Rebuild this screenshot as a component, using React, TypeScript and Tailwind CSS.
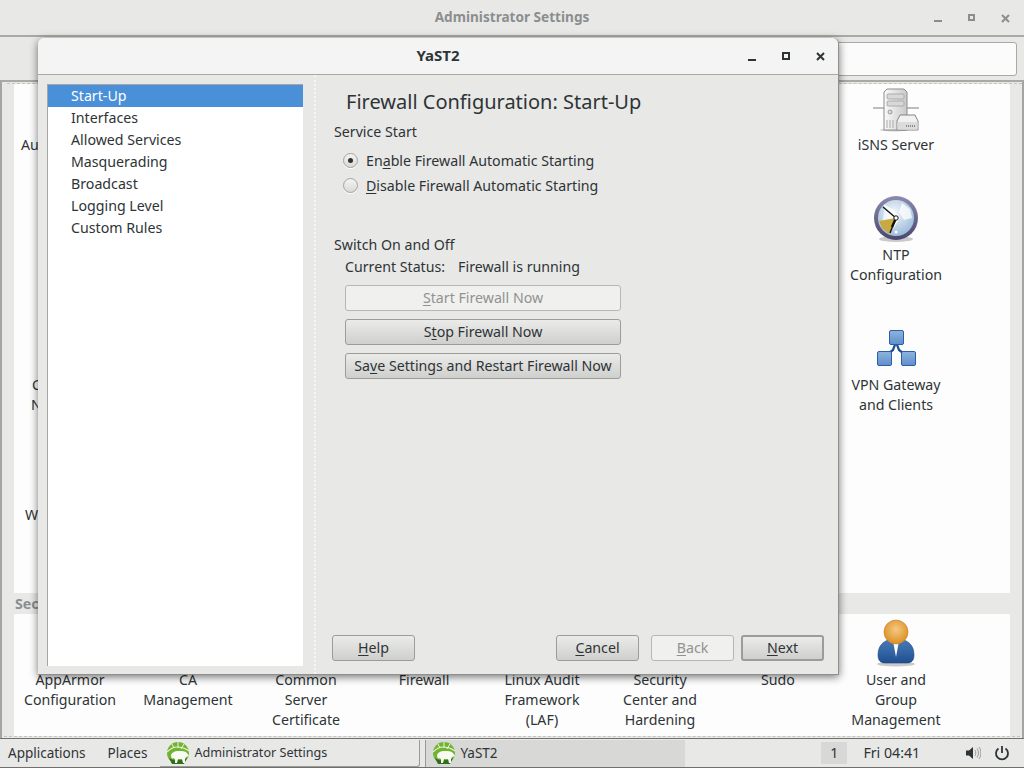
import type { ReactNode } from 'react';

const FONT = 'font-["Noto_Sans","Open_Sans",sans-serif]';

function ServerIcon() {
  return (
    <svg width="48" height="48" viewBox="0 0 48 48">
      <defs>
        <linearGradient id="srv" x1="0" y1="0" x2="1" y2="0">
          <stop offset="0" stopColor="#fafafa" />
          <stop offset="1" stopColor="#c9c9c9" />
        </linearGradient>
      </defs>
      <path d="M1 24h46" stroke="#bdbdbd" strokeWidth="2" />
      <ellipse cx="22" cy="46" rx="14" ry="1.500" fill="#00000033" />
      <path d="M12 8l3-3h17l3 3v38H12z" fill="url(#srv)" stroke="#8c8c8c" />
      <rect x="15" y="10" width="17" height="5" rx="1" fill="#d8d8d8" stroke="#999" strokeWidth=".7" />
      <rect x="15" y="17" width="17" height="5" rx="1" fill="#d8d8d8" stroke="#999" strokeWidth=".7" />
      <circle cx="18" cy="28" r="2" fill="#ddd" stroke="#888" strokeWidth=".8" />
      <path d="M15 36v8M18 36v8M21 36v8" stroke="#aaa" />
      <path d="M26 35l2-4h15l3 6v9H25v-9z" fill="#f1f1f1" stroke="#858585" />
      <path d="M25.500 38h20v7.500h-20z" fill="#dcdcdc" />
      <path d="M34 42h10" stroke="#888" strokeWidth="2" strokeDasharray="1 1" />
    </svg>
  );
}

function ClockIcon() {
  return (
    <svg width="48" height="48" viewBox="0 0 48 48">
      <defs>
        <radialGradient id="face" cx=".45" cy=".35" r=".75">
          <stop offset="0" stopColor="#f5f7fa" />
          <stop offset="1" stopColor="#8fb3d4" />
        </radialGradient>
        <linearGradient id="rim" x1="0" y1="0" x2="0" y2="1">
          <stop offset="0" stopColor="#8d8bb0" />
          <stop offset="1" stopColor="#4a466e" />
        </linearGradient>
      </defs>
      <ellipse cx="24" cy="45" rx="17" ry="3" fill="#00000033" />
      <circle cx="24" cy="24" r="22" fill="url(#rim)" />
      <circle cx="24" cy="24" r="18" fill="url(#face)" />
      <path d="M12 10l10 6 6 8-6 10-6 4-6-8 2-12z" fill="#ffffff" opacity=".7" />
      <path d="M30 9l8 6 2 9-8 2-5-8z" fill="#ffffff" opacity=".75" />
      <path d="M24 24L7 27l3 7 7 6z" fill="#c8a93f" />
      <path d="M24 24L11 13M24 24l-6 15" stroke="#111" strokeWidth="1.400" fill="none" />
      <path d="M24 24l-4 9" stroke="#111" strokeWidth="2.400" />
      <circle cx="24" cy="24" r="2.200" fill="#fff" stroke="#111" />
      <circle cx="24" cy="38" r="1.500" fill="#fff" />
    </svg>
  );
}

function NetworkIcon() {
  return (
    <svg width="48" height="48" viewBox="0 0 48 48">
      <defs>
        <linearGradient id="nb" x1="0" y1="0" x2="0" y2="1">
          <stop offset="0" stopColor="#8fb3de" />
          <stop offset="1" stopColor="#5f8fcb" />
        </linearGradient>
      </defs>
      <path d="M24 18l-3 8-8 6M24 18l3 8 8 6" stroke="#1f4f96" strokeWidth="2.200" fill="none" />
      <rect x="17.500" y="6.500" width="14" height="14" rx="1.500" fill="url(#nb)" stroke="#2a5ea8" />
      <rect x="5.500" y="27.500" width="14" height="14" rx="1.500" fill="url(#nb)" stroke="#2a5ea8" />
      <rect x="29.500" y="27.500" width="14" height="14" rx="1.500" fill="url(#nb)" stroke="#2a5ea8" />
    </svg>
  );
}

function UserIcon() {
  return (
    <svg width="48" height="48" viewBox="0 0 48 48">
      <defs>
        <radialGradient id="head" cx=".5" cy=".4" r=".6">
          <stop offset="0" stopColor="#f4c982" />
          <stop offset="1" stopColor="#dc8f23" />
        </radialGradient>
        <linearGradient id="body" x1="0" y1="0" x2="0" y2="1">
          <stop offset="0" stopColor="#4a7cb8" />
          <stop offset="1" stopColor="#1f4f92" />
        </linearGradient>
      </defs>
      <ellipse cx="24" cy="45" rx="19" ry="2.500" fill="#00000033" />
      <path d="M6 36c0-10 6-14 13-16h10c7 2 13 6 13 16 0 6-3 8-7 8H13c-4 0-7-2-7-8z" fill="url(#body)" stroke="#1b4580" strokeWidth=".6" />
      <path d="M21 22l3 16 3-16z" fill="#fff" />
      <circle cx="24" cy="13" r="12" fill="url(#head)" stroke="#c57f1c" strokeWidth=".6" />
    </svg>
  );
}

function GeckoIcon() {
  return (
    <svg width="24" height="22" viewBox="0 0 24 22">
      <circle cx="12" cy="11" r="11" fill="#72b332" />
      <path d="M1 10c4-4 7-5 10-5s8 1 12 4" stroke="#e9f5da" strokeWidth="1.200" fill="none" />
      <path d="M12 0v6M18 2l-3 5M6 2l2 4" stroke="#e9f5da" strokeWidth="1" />
      <path d="M3 16c5 3 13 3 18 0l-3 6H6z" fill="#2f6f18" />
      <path d="M5 14c0-3 3-5 8-5 3 0 6 0 8 2l2 3-3 1-1 2v4h-2l-1-4h-4l-1 4H9v-4l-2-1-1 1z" fill="#fafaf5" />
    </svg>
  );
}

function AppItem({ icon, lines }: { icon?: ReactNode; lines: string[] }) {
  return (
    <div className="flex flex-col items-center text-center">
      <div className="h-[48px] w-[48px] mb-[3px]">{icon}</div>
      {lines.map((l) => (
        <div key={l} className="h-[20px] leading-[20px] whitespace-nowrap">
          {l}
        </div>
      ))}
    </div>
  );
}

function PushButton({
  children,
  disabled,
  isDefault,
  className,
}: {
  children: ReactNode;
  disabled?: boolean;
  isDefault?: boolean;
  className?: string;
}) {
  return (
    <div
      className={`h-[26px] flex items-center justify-center rounded-[3px] border leading-none ${
        disabled
          ? 'border-[#b6b6b3] bg-[#f0f0ef] text-[#92928f]'
          : 'border-[#9c9c99] bg-gradient-to-b from-[#ebebea] to-[#cfcfcd] text-[#2e3436]'
      } ${isDefault ? 'border-2 border-[#9a9a97]' : ''} ${className ?? ''}`}
    >
      <span>{children}</span>
    </div>
  );
}

function Radio({ checked, children }: { checked?: boolean; children: ReactNode }) {
  return (
    <div className="h-[25px] flex items-center">
      <div className="w-[15px] h-[15px] rounded-full border border-[#a2a29f] bg-gradient-to-b from-[#f4f4f3] to-[#d9d9d7] flex items-center justify-center shadow-[0_1px_0_#fff]">
        {checked && <div className="w-[5px] h-[5px] rounded-full bg-[#2e3436]" />}
      </div>
      <span className="ml-[8px]">{children}</span>
    </div>
  );
}

function BgTitleBar() {
  return (
    <div className="relative h-[37px] shrink-0 bg-[#e8e8e7] border-b-2 border-[#a9a9a6] flex items-center justify-center">
      <span className="font-bold text-[#8b8e8f] text-[13.6px]">Administrator Settings</span>
      <div className="absolute right-[14px] top-[12px] flex items-start gap-[26px]">
        <div className="w-[8px] h-[2px] mt-[8px] bg-[#8b8e8f]" />
        <div className="w-[7px] h-[7px] mt-[2px] border-2 border-[#8b8e8f]" />
        <svg width="9" height="9" viewBox="0 0 9 9" className="mt-[2px]">
          <path d="M1 1l7 7M8 1L1 8" stroke="#8b8e8f" strokeWidth="2" />
        </svg>
      </div>
    </div>
  );
}

function Dialog() {
  const items = ['Start-Up', 'Interfaces', 'Allowed Services', 'Masquerading', 'Broadcast', 'Logging Level', 'Custom Rules'];
  return (
    <div className="absolute left-[38px] top-[38px] w-[801px] h-[637px] flex flex-col bg-[#e8e8e7] rounded-t-[6px] shadow-[0_2px_8px_rgba(0,0,0,0.55)] border-r border-b border-[#8f8f8c] text-[#2e3436]">
      <div className="relative h-[37px] shrink-0 bg-[#f4f4f4] rounded-t-[6px] border-b border-[#a9a9a6] flex items-center justify-center">
        <span className="font-bold text-[15px] text-[#2e3436] pb-[1px]">YaST2</span>
        <div className="absolute left-[710px] top-[14px] flex items-start gap-[26px]">
          <div className="w-[8px] h-[2px] mt-[7px] bg-[#2e3436]" />
          <div className="w-[8px] h-[8px] mt-0 border-2 border-[#2e3436]" />
          <svg width="9" height="9" viewBox="0 0 9 9">
            <path d="M1 1l7 7M8 1L1 8" stroke="#2e3436" strokeWidth="2" />
          </svg>
        </div>
      </div>
      <div className="flex flex-1 min-h-0">
        {/* tree */}
        <div className="w-[278px] shrink-0 pl-[9px] pt-[9px] pb-[8px] pr-[11px] border-r-2 border-dotted border-[#f6f6f6]">
          <div className="h-full bg-white border-l border-t border-[#a5a5a2]">
            {items.map((it, i) => (
              <div
                key={it}
                className={`h-[22px] leading-[21px] pl-[23px] ${i === 0 ? 'bg-[#4a90d9] text-white' : ''}`}
              >
                {it}
              </div>
            ))}
          </div>
        </div>
        {/* content */}
        <div className="relative flex-1 pl-[18px] flex flex-col">
          <div className="pt-[13px] pl-[12px] h-[46px] text-[20px] leading-[28px]">Firewall Configuration: Start-Up</div>
          <div className="h-[22px] leading-[22px]">Service Start</div>
          <div className="pl-[9px] pt-[5px]">
            <Radio checked>
              En<u className="underline-offset-2">a</u>ble Firewall Automatic Starting
            </Radio>
            <Radio>
              <u className="underline-offset-2">D</u>isable Firewall Automatic Starting
            </Radio>
          </div>
          <div className="h-[22px] leading-[22px] mt-[36px]">Switch On and Off</div>
          <div className="pl-[11px]">
            <div className="h-[22px] leading-[22px] flex gap-[13px]">
              <span>Current Status:</span>
              <span>Firewall is running</span>
            </div>
            <div className="w-[276px] mt-[7px] flex flex-col gap-[8px]">
              <PushButton disabled>
                <u className="underline-offset-2">S</u>tart Firewall Now
              </PushButton>
              <PushButton>
                S<u className="underline-offset-2">t</u>op Firewall Now
              </PushButton>
              <PushButton>
                Sa<u className="underline-offset-2">v</u>e Settings and Restart Firewall Now
              </PushButton>
            </div>
          </div>
          <div className="mt-auto mb-[13px] -ml-[2px] flex pr-[14px]">
            <PushButton className="w-[83px]">
              <u className="underline-offset-2">H</u>elp
            </PushButton>
            <PushButton className="w-[83px] ml-auto">
              <u className="underline-offset-2">C</u>ancel
            </PushButton>
            <PushButton disabled className="w-[83px] ml-[12px]">
              <u className="underline-offset-2">B</u>ack
            </PushButton>
            <PushButton isDefault className="w-[83px] ml-[7px]">
              <u className="underline-offset-2">N</u>ext
            </PushButton>
          </div>
        </div>
      </div>
    </div>
  );
}

export default function App() {
  return (
    <div className={`relative w-[1024px] h-[768px] overflow-hidden flex flex-col bg-[#e8e8e7] text-[14.2px] text-[#2e3436] ${FONT}`}>
      <BgTitleBar />
      {/* toolbar with search field */}
      <div className="h-[45px] shrink-0 flex justify-end items-start pt-[5px] pr-[7px] border-b-2 border-[#a9a9a6]">
        <div className="w-[300px] h-[34px] rounded-[3px] border border-[#a9a9a6] bg-[#fbfbfb]" />
      </div>
      {/* control center */}
      <div className="flex-1 min-h-0 flex flex-col border-x-2 border-[#a5a5a2] px-[12px] relative">
        <div className="absolute left-[5px] right-[0px] top-[1px] border-t border-dashed border-[#c4c4c2]" />
        <div className="h-[509px] shrink-0 mt-[2px] bg-[#fdfdfd] overflow-hidden">
          <div className="grid grid-cols-[repeat(8,118px)] -ml-[3px] gap-y-[39px] items-start">
            <AppItem lines={['Authentication']} />
            <div className="col-span-6" />
            <AppItem icon={<ServerIcon />} lines={['iSNS Server']} />
            <div className="col-span-7" />
            <AppItem icon={<ClockIcon />} lines={['NTP', 'Configuration']} />
            <AppItem lines={['Connection', 'Networking']} />
            <div className="col-span-6" />
            <AppItem icon={<NetworkIcon />} lines={['VPN Gateway', 'and Clients']} />
            <AppItem lines={['Wake-on-LAN']} />
          </div>
        </div>
        <div className="h-[21px] shrink-0 bg-[#e8e8e7] text-[#8b8e8f] font-bold leading-[21px] pl-[1px]">Security</div>
        <div className="flex-1 min-h-0 bg-[#fdfdfd] overflow-hidden pt-[5px]">
          <div className="grid grid-cols-[repeat(8,118px)] -ml-[3px] items-start">
            <AppItem lines={['AppArmor', 'Configuration']} />
            <AppItem lines={['CA', 'Management']} />
            <AppItem lines={['Common', 'Server', 'Certificate']} />
            <AppItem lines={['Firewall']} />
            <AppItem lines={['Linux Audit', 'Framework', '(LAF)']} />
            <AppItem lines={['Security', 'Center and', 'Hardening']} />
            <AppItem lines={['Sudo']} />
            <AppItem icon={<UserIcon />} lines={['User and', 'Group', 'Management']} />
          </div>
        </div>
        <div className="h-[2px] shrink-0 border-t border-dashed border-[#c4c4c2] -mx-[10px]" />
      </div>
      {/* panel */}
      <div className="h-[30px] shrink-0 flex items-center border-y border-[#6f6f6c] bg-[#e8e8e7]">
        <span className="ml-[8px] text-[13.5px]">Applications</span>
        <span className="ml-[22px] text-[13.5px]">Places</span>
        <div className="ml-[13px] w-[260px] h-[27px] flex items-center pl-[6px] gap-[4px] border-r border-b border-[#9a9a97] rounded-br-[3px]">
          <GeckoIcon />
          <span className="text-[12.6px] pt-[2px]">Administrator Settings</span>
        </div>
        <div className="ml-[5px] w-[260px] h-[27px] flex items-center pl-[6px] gap-[4px] bg-[#d8d8d6] border-l border-[#9a9a97]">
          <GeckoIcon />
          <span className="text-[13.5px] pt-[1px]">YaST2</span>
        </div>
        <div className="ml-[136px] w-[26px] h-[22px] bg-[#d8d8d6] flex items-center justify-center">1</div>
        <span className="ml-[16px]">Fri 04:41</span>
        <svg width="16" height="16" viewBox="0 0 16 16" className="ml-[45px]">
          <path d="M1 5.500h3L8 2v12L4 10.500H1z" fill="#2e3436" />
          <path d="M10 5c1 1.500 1 4.500 0 6M12 3.500c2 2.500 2 6.500 0 9M14 2c2.500 3.500 2.500 8.500 0 12" stroke="#9a9a97" fill="none" />
        </svg>
        <svg width="16" height="16" viewBox="0 0 16 16" className="ml-[13px]">
          <path d="M8 1v7" stroke="#2e3436" strokeWidth="1.800" />
          <path d="M4.500 3.500a6 6 0 1 0 7 0" stroke="#2e3436" strokeWidth="1.800" fill="none" />
        </svg>
      </div>
      <Dialog />
    </div>
  );
}
